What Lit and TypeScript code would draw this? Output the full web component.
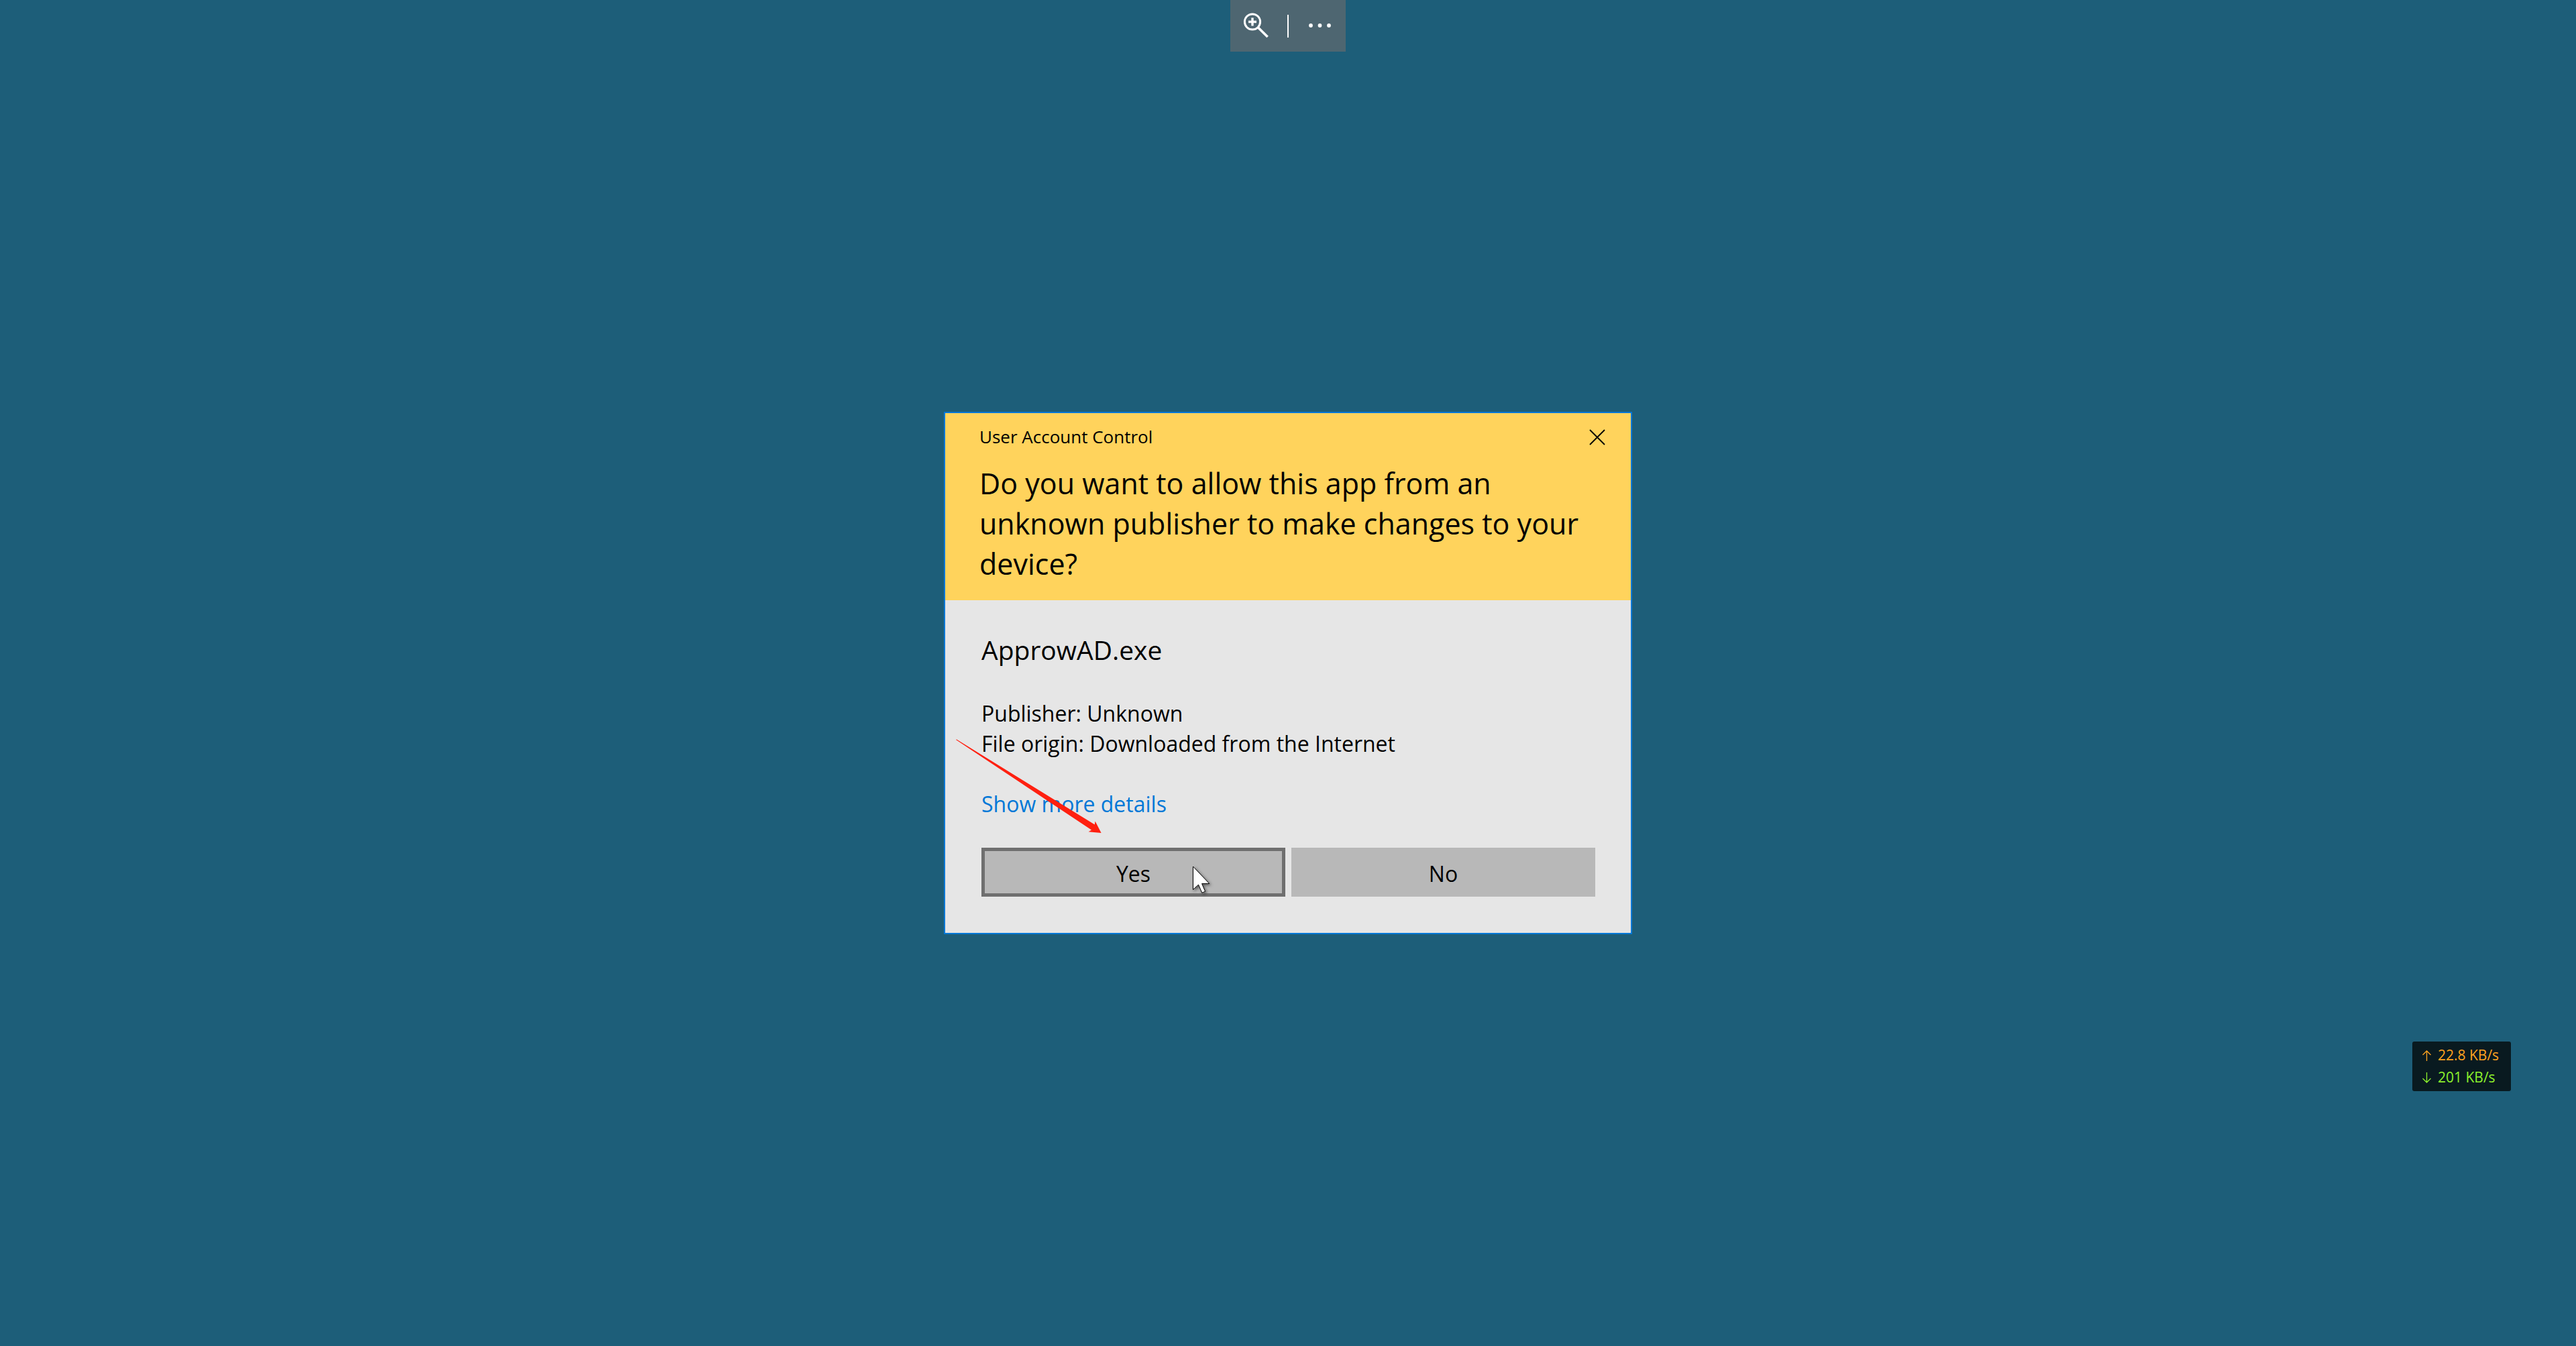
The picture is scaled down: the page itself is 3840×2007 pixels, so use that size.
import { LitElement, html, css } from "lit";
import { customElement, property } from "lit/decorators.js";

@customElement("screen-toolbar")
class ScreenToolbar extends LitElement {
  static styles = css`
    :host {
      display: block;
    }
    .bar {
      display: flex;
      align-items: stretch;
      height: 77px;
      background: #4e6671;
    }
    .tool {
      display: flex;
      align-items: center;
      justify-content: center;
      width: 85px;
      margin: 0;
      padding: 0;
      border: 0;
      background: transparent;
      color: #fff;
    }
    .divider {
      align-self: center;
      width: 2px;
      height: 34px;
      background: #fff;
    }
    svg {
      display: block;
    }
  `;

  render() {
    return html`
      <div class="bar" role="toolbar" aria-label="Display">
        <button class="tool" type="button" aria-label="Zoom in">
          <svg width="85" height="77" viewBox="0 0 85 77" fill="none" stroke="currentColor">
            <circle cx="33" cy="32.5" r="11.6" stroke-width="3" />
            <path d="M33 26.5v12M27 32.5h12" stroke-width="3.4" />
            <path d="M41.2 40.8L55.6 55" stroke-width="3.6" />
          </svg>
        </button>
        <span class="divider"></span>
        <button class="tool" type="button" aria-label="More">
          <svg width="85" height="77" viewBox="0 0 85 77" fill="currentColor">
            <circle cx="33" cy="38" r="2.9" />
            <circle cx="46.5" cy="38" r="2.9" />
            <circle cx="60" cy="38" r="2.9" />
          </svg>
        </button>
      </div>
    `;
  }
}

@customElement("consent-dialog")
class ConsentDialog extends LitElement {
  @property() program = "";
  @property() publisher = "";
  @property() origin = "";

  static styles = css`
    :host {
      display: block;
      position: relative;
      box-sizing: border-box;
      width: 1026px;
      max-width: 100%;
      border: 2px solid #0078d7;
      background: #e6e6e6;
      color: #000;
    }
    .header {
      padding: 17px 33px 24px 51px;
      background: #ffd35c;
    }
    .titlebar {
      display: flex;
      align-items: center;
      justify-content: space-between;
      margin-bottom: 22px;
    }
    .caption {
      font-size: 26px;
      line-height: 36px;
    }
    .close {
      display: block;
      height: 36px;
      margin: 0;
      padding: 0 4px;
      border: 0;
      background: transparent;
      color: #000;
    }
    svg {
      display: block;
    }
    h1 {
      margin: 0;
      font-size: 43px;
      font-weight: 400;
      line-height: 60px;
    }
    .body {
      display: flex;
      flex-direction: column;
      align-items: flex-start;
      gap: 45px;
      padding: 47px 53px 54px 54px;
    }
    h2 {
      margin: 0;
      font-size: 39px;
      font-weight: 400;
      line-height: 54px;
    }
    p {
      margin: 0;
    }
    .facts,
    .more {
      font-size: 32px;
      line-height: 45px;
    }
    .more {
      color: #0078d7;
      text-decoration: none;
    }
    .actions {
      display: grid;
      grid-template-columns: 1fr 1fr;
      gap: 9px;
      align-self: stretch;
      margin-top: -2px;
    }
    .action {
      box-sizing: border-box;
      height: 73px;
      margin: 0;
      padding: 4px 0 0;
      border: 5px solid #b8b8b8;
      background: #b8b8b8;
      color: #000;
      font: inherit;
      font-size: 32px;
      line-height: 45px;
    }
    .action.primary {
      border-color: #6f6f6f;
    }
    .marker {
      position: absolute;
      left: 16px;
      top: 486px;
      pointer-events: none;
    }
    .pointer {
      position: absolute;
      left: 367px;
      top: 674px;
      pointer-events: none;
      filter: drop-shadow(2px 2px 2px rgba(0, 0, 0, 0.5));
    }
  `;

  render() {
    return html`
      <div class="header">
        <div class="titlebar">
          <span class="caption">User Account Control</span>
          <button class="close" type="button" aria-label="Close">
            <svg width="26" height="26" viewBox="0 0 26 26" fill="none" stroke="currentColor" stroke-width="1.8">
              <path d="M2 3L24 25M24 3L2 25" />
            </svg>
          </button>
        </div>
        <h1>Do you want to allow this app from an unknown publisher to make changes to your device?</h1>
      </div>
      <div class="body">
        <h2>${this.program}</h2>
        <div class="facts">
          <p>Publisher: ${this.publisher}</p>
          <p>File origin: ${this.origin}</p>
        </div>
        <a class="more" href="#details">Show more details</a>
        <div class="actions">
          <button class="action primary" type="button">Yes</button>
          <button class="action" type="button">No</button>
        </div>
      </div>
      <svg class="marker" width="218" height="142" viewBox="0 0 218 142" aria-hidden="true">
        <path d="M0 1L1 .6L206.8 127.4L207.6 122.6L216.6 140L197.6 138.2L202 135.6Z" fill="#ff2010" />
      </svg>
      <svg class="pointer" width="30" height="44" viewBox="0 0 30 44" aria-hidden="true">
        <path
          d="M2.5 2V36.5L10.5 29.2L15.8 41.2L20.6 39.2L15.6 27.6H26.8Z"
          fill="#fff"
          stroke="#000"
          stroke-width="1"
        />
      </svg>
    `;
  }
}

@customElement("network-meter")
class NetworkMeter extends LitElement {
  @property() up = "";
  @property() down = "";

  static styles = css`
    :host {
      display: block;
      box-sizing: border-box;
      width: 147px;
      padding: 4px 0 4px 15px;
      border-radius: 3px;
      background: #091a20;
      font-size: 21px;
      line-height: 33px;
    }
    .rate {
      display: flex;
      align-items: center;
      gap: 10px;
      white-space: nowrap;
    }
    .sent {
      color: #ffa31f;
    }
    .received {
      color: #8cf22c;
    }
  `;

  render() {
    return html`
      <div class="rate sent">
        <svg width="13" height="16" viewBox="0 0 13 16" fill="none" stroke="currentColor" stroke-width="1.3">
          <path d="M6.5 16V1M.5 7L6.5 1L12.5 7" />
        </svg>
        <span>${this.up}</span>
      </div>
      <div class="rate received">
        <svg width="13" height="16" viewBox="0 0 13 16" fill="none" stroke="currentColor" stroke-width="1.3">
          <path d="M6.5 0V15M.5 9L6.5 15L12.5 9" />
        </svg>
        <span>${this.down}</span>
      </div>
    `;
  }
}

@customElement("app-root")
class AppRoot extends LitElement {
  static styles = css`
    :host {
      display: block;
      font-family: "Segoe UI", "Open Sans", "Noto Sans", sans-serif;
    }
    .desktop {
      position: relative;
      display: grid;
      grid-template-rows: 1fr auto 1fr;
      justify-items: center;
      min-height: 100vh;
      background: #1d5e79;
    }
    .toolbar {
      align-self: start;
    }
    .meter {
      position: absolute;
      right: 97px;
      bottom: 380px;
    }
  `;

  render() {
    return html`
      <main class="desktop">
        <screen-toolbar class="toolbar"></screen-toolbar>
        <consent-dialog
          program="ApprowAD.exe"
          publisher="Unknown"
          origin="Downloaded from the Internet"
        ></consent-dialog>
        <network-meter class="meter" up="22.8 KB/s" down="201 KB/s"></network-meter>
      </main>
    `;
  }
}
